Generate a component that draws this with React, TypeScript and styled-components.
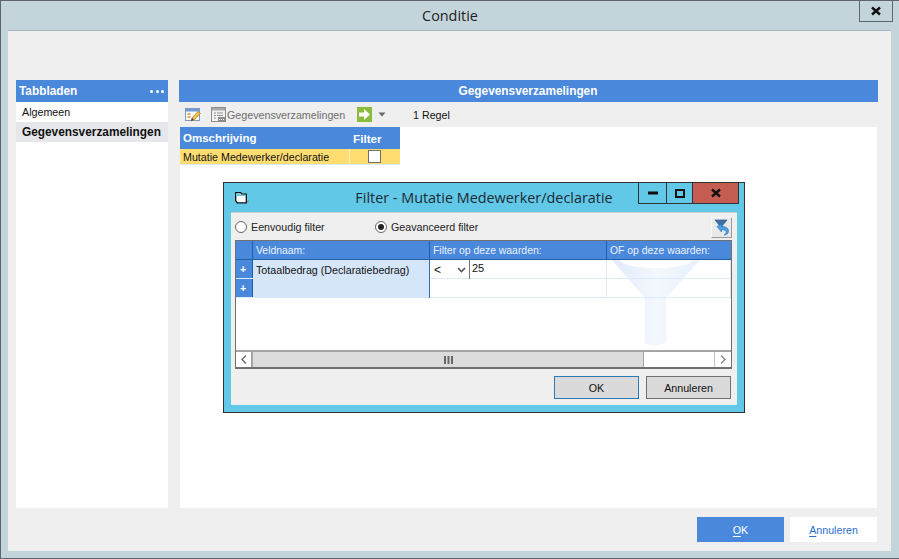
import React from "react";
import styled, { createGlobalStyle } from "styled-components";

const Global = createGlobalStyle`
  html, body { margin: 0; padding: 0; background: #c3d5db; }
  #root { width: 899px; height: 559px; overflow: hidden; }
  * { box-sizing: border-box; }
`;

const Page = styled.div`
  position: relative;
  width: 899px;
  height: 559px;
  display: flex;
  flex-direction: column;
  background: #c3d5db;
  border: solid #5f6570;
  border-width: 1px 0 1px 1px;
  font-family: "Liberation Sans", Tahoma, sans-serif;
  font-size: 10.7px;
  color: #111;
`;
const TitleBar = styled.div`
  height: 29px;
  flex: none;
  display: flex;
  align-items: center;
  justify-content: center;
  font-family: "Open Sans", sans-serif;
  font-size: 14.4px;
  color: #222;
  padding-bottom: 1px;
`;
const CloseBtn = styled.div`
  position: absolute;
  left: 858px;
  top: -1px;
  width: 34px;
  height: 22px;
  border: 1px solid #5f6570;
  display: flex;
  align-items: center;
  justify-content: center;
  svg { display: block; }
`;
const Content = styled.div`
  flex: 1;
  margin: 0 8px 7px 7px;
  background: #efefef;
  border-top: 1px solid #a7b4bb;
  display: flex;
  flex-direction: column;
  padding: 49px 13px 0 8px;
`;
const Columns = styled.div`
  flex: 1;
  display: flex;
  gap: 11px;
  min-height: 0;
`;
const LeftPanel = styled.div`
  width: 152px;
  display: flex;
  flex-direction: column;
  background: #fff;
`;
const RightPanel = styled.div`
  width: 699px;
  display: flex;
  flex-direction: column;
`;
const Header = styled.div<{ $center?: boolean }>`
  height: 22px;
  flex: none;
  background: #4a88dc;
  color: #fff;
  font-weight: 700;
  font-size: 11.85px;
  display: flex;
  align-items: center;
  justify-content: ${(p) => (p.$center ? "center" : "space-between")};
  padding: 0 4px 0 3px;
`;
const Dots = styled.span`
  display: flex;
  gap: 2.5px;
  i { width: 3px; height: 3px; background: #fff; border-radius: 50%; display: block; }
`;
const TabItem = styled.div<{ $active?: boolean }>`
  height: 20px;
  display: flex;
  align-items: center;
  padding-left: 6px;
  background: ${(p) => (p.$active ? "#e6e7eb" : "#fff")};
  font-weight: ${(p) => (p.$active ? 700 : 400)};
  font-size: ${(p) => (p.$active ? "11.85px" : "10.7px")};
  white-space: nowrap;
`;
const Toolbar = styled.div`
  height: 25px;
  flex: none;
  display: flex;
  align-items: center;
  padding-left: 6px;
  color: #111;
  svg { display: block; flex: none; }
`;
const ToolLabel = styled.span<{ $muted?: boolean; $w: number }>`
  width: ${(p) => p.$w}px;
  color: ${(p) => (p.$muted ? "#6d6d6d" : "#111")};
  white-space: nowrap;
`;
const Spacer = styled.span<{ $w: number }>`
  width: ${(p) => p.$w}px;
  flex: none;
`;
const Sheet = styled.div`
  flex: 1;
  margin: 0 1px;
  background: #fff;
`;
const DataTable = styled.div`
  width: 220px;
  display: grid;
  grid-template-columns: 169px 51px;
`;
const TableHead = styled.div<{ $center?: boolean }>`
  height: 22px;
  background: #4a88dc;
  color: #fff;
  font-weight: 700;
  font-size: ${(p) => (p.$center ? "11.7px" : "11.5px")};
  display: flex;
  align-items: center;
  padding-left: ${(p) => (p.$center ? "4px" : "3px")};
`;
const TableCell = styled.div<{ $center?: boolean }>`
  height: 16px;
  background: #ffdd71;
  border-bottom: 1px solid #dbeaf5;
  border-left: ${(p) => (p.$center ? "1px solid #fff3c4" : "0")};
  display: flex;
  align-items: center;
  justify-content: ${(p) => (p.$center ? "center" : "flex-start")};
  padding-left: 3px;
  padding-right: ${(p) => (p.$center ? "5px" : "0")};
  white-space: nowrap;
`;
const CheckBox = styled.span`
  width: 13px;
  height: 13px;
  background: #fff;
  border: 1px solid #707070;
  display: block;
`;
const Footer = styled.div`
  height: 43px;
  flex: none;
  display: flex;
  justify-content: flex-end;
  gap: 6px;
  padding: 9px 1px 0 0;
`;
const MainButton = styled.div<{ $primary?: boolean }>`
  width: 87px;
  height: 25px;
  background: ${(p) => (p.$primary ? "#4a88dc" : "#fff")};
  color: ${(p) => (p.$primary ? "#fff" : "#2d6fd2")};
  font-size: 10.7px;
  display: flex;
  align-items: center;
  justify-content: center;
  u { text-underline-offset: 2px; }
`;

/* dialog: a window lying over the page */
const Dialog = styled.div`
  position: absolute;
  left: 222px;
  top: 181px;
  width: 522px;
  height: 231px;
  background: #62c8e8;
  border: 1px solid #2f3338;
  display: flex;
  flex-direction: column;
  padding: 0 7px 7px;
`;
const DialogBar = styled.div`
  height: 29px;
  flex: none;
  display: flex;
  align-items: center;
  justify-content: center;
  font-family: "Open Sans", sans-serif;
  font-size: 14.4px;
  color: #1d2a33;
  padding-bottom: 1px;
`;
const DialogIcon = styled.svg`
  position: absolute;
  left: 11px;
  top: 9px;
`;
const WinButtons = styled.div`
  position: absolute;
  top: 0;
  right: 5px;
  display: flex;
  height: 21px;
  border: solid #2f3338;
  border-width: 0 1px 1px 1px;
`;
const WinBtn = styled.div<{ $w: number; $close?: boolean }>`
  width: ${(p) => p.$w}px;
  background: ${(p) => (p.$close ? "#c45c52" : "transparent")};
  border-right: ${(p) => (p.$close ? "0" : "1px solid #2f3338")};
  display: flex;
  align-items: center;
  justify-content: center;
  svg { display: block; }
`;
const DialogBody = styled.div`
  flex: 1;
  background: #efefef;
  border-top: 1px solid #c9d0d4;
  display: flex;
  flex-direction: column;
  padding: 0 5px 0 4px;
  min-height: 0;
`;
const RadioRow = styled.div`
  height: 27px;
  flex: none;
  display: flex;
  align-items: center;
  position: relative;
`;
const RadioLabel = styled.label<{ $w: number }>`
  width: ${(p) => p.$w}px;
  display: flex;
  align-items: center;
  gap: 4px;
  white-space: nowrap;
  color: #222;
`;
const RadioDot = styled.span<{ $on?: boolean }>`
  width: 12px;
  height: 12px;
  border-radius: 50%;
  background: #fff;
  border: 1px solid #666;
  flex: none;
  display: flex;
  align-items: center;
  justify-content: center;
  &::after {
    content: "";
    display: ${(p) => (p.$on ? "block" : "none")};
    width: 6px;
    height: 6px;
    border-radius: 50%;
    background: #222;
  }
`;
const UndoBtn = styled.div`
  position: absolute;
  right: 0;
  top: 4px;
  width: 21px;
  height: 21px;
  background: #e9e9e9;
  border: 1px solid;
  border-color: #f8f8f8 #9a9a9a #9a9a9a #f8f8f8;
  display: flex;
  align-items: center;
  justify-content: center;
`;
const Grid = styled.div`
  position: relative;
  height: 129px;
  flex: none;
  background: #fff;
  border: 1px solid #707070;
  border-bottom-width: 2px;
  display: flex;
  flex-direction: column;
`;
const Watermark = styled.svg`
  position: absolute;
  left: 375px;
  top: 19px;
`;
const GridRow = styled.div<{ $head?: boolean }>`
  position: relative;
  display: grid;
  grid-template-columns: 17px 177px 177px 1fr;
  height: 19px;
  background: ${(p) => (p.$head ? "#4a88dc" : "transparent")};
  border-bottom: 1px solid ${(p) => (p.$head ? "#1f5fa8" : "#dcebf7")};
  color: ${(p) => (p.$head ? "#fff" : "#111")};
`;
const PlusCell = styled.div`
  background: #4a88dc;
  color: #fff;
  font-size: 10.5px;
  font-weight: 700;
  display: flex;
  align-items: center;
  justify-content: center;
  padding-right: 2px;
  border-right: 1px solid #1f5fa8;
`;
const HeadCell = styled.div<{ $line?: boolean }>`
  display: flex;
  align-items: center;
  padding-left: 3px;
  border-right: ${(p) => (p.$line ? "1px solid #1f5fa8" : "0")};
  white-space: nowrap;
  color: #eaf3ff;
  font-size: 10.4px;
`;
const NameCell = styled.div`
  background: #d5e6fb;
  display: flex;
  align-items: center;
  padding-left: 3px;
  border-right: 1px solid #2a6fb0;
  white-space: nowrap;
  margin-bottom: -1px;
`;
const ValueCell = styled.div`
  display: flex;
  align-items: center;
  border-right: 1px solid #dcebf7;
  margin-bottom: -1px;
`;
const Combo = styled.div`
  width: 40px;
  height: 100%;
  flex: none;
  border-right: 1px solid #777;
  display: flex;
  align-items: center;
  justify-content: space-between;
  padding: 0 3px 0 4px;
  font-size: 12px;
  svg { display: block; }
`;
const ValueText = styled.span`
  padding: 0 0 3px 2px;
  font-size: 11px;
`;
const GridFill = styled.div`
  flex: 1;
`;
const ScrollBar = styled.div`
  height: 17px;
  flex: none;
  position: relative;
  display: flex;
  background: #fff;
  border-top: 2px solid #a4a4a4;
  svg { display: block; }
`;
const ScrollArrow = styled.div<{ $side: "left" | "right" }>`
  width: 17px;
  flex: none;
  display: flex;
  align-items: center;
  justify-content: center;
  border-${(p) => (p.$side === "left" ? "right: 2px solid #a4a4a4" : "left: 1px solid #c4c4c4")};
`;
const ScrollThumb = styled.div`
  width: 391px;
  flex: none;
  background: #dcdcdc;
  border-right: 1px solid #a4a4a4;
  display: flex;
  align-items: center;
  justify-content: center;
`;
const ScrollRest = styled.div`
  flex: 1;
`;
const DialogFooter = styled.div`
  flex: 1;
  display: flex;
  justify-content: flex-end;
  gap: 7px;
  padding: 7px 1px 0 0;
`;
const DlgButton = styled.div<{ $focus?: boolean }>`
  width: 85px;
  height: 23px;
  background: #dadada;
  border: 1px solid ${(p) => (p.$focus ? "#2a7ab8" : "#707070")};
  color: #111;
  font-size: 10.7px;
  display: flex;
  align-items: center;
  justify-content: center;
`;

export default function App() {
  return (
    <Page>
      <Global />
      <TitleBar>Conditie</TitleBar>
      <CloseBtn>
        <svg width="12" height="10" viewBox="0 0 12 10">
          <path d="M2 1.5 L10 8.5 M10 1.5 L2 8.5" stroke="#111" strokeWidth="2.4" />
        </svg>
      </CloseBtn>
      <Content>
        <Columns>
          <LeftPanel>
            <Header>
              Tabbladen
              <Dots><i /><i /><i /></Dots>
            </Header>
            <TabItem>Algemeen</TabItem>
            <TabItem $active>Gegevensverzamelingen</TabItem>
          </LeftPanel>
          <RightPanel>
            <Header $center>Gegevensverzamelingen</Header>
            <Toolbar>
              <svg width="16" height="16" viewBox="0 0 16 16">
                <rect x="0.5" y="1.5" width="14" height="12" fill="#fdfdfd" stroke="#7d9cc4" />
                <rect x="1" y="2" width="13" height="2.5" fill="#6f9ad6" />
                <path d="M2.5 7h3M2.5 10h3" stroke="#d88a2a" strokeWidth="1.4" />
                <path d="M6 14 L7 11 L13 4.5 L15.5 6.5 L9 13 Z" fill="#f3c04a" stroke="#a87a24" strokeWidth="0.7" />
                <path d="M6 14 L7 11 L9 13 Z" fill="#444" />
              </svg>
              <Spacer $w={10} />
              <svg width="15" height="15" viewBox="0 0 15 15">
                <rect x="0.5" y="0.5" width="14" height="14" fill="#f2f2f2" stroke="#8c8c8c" />
                <rect x="1" y="1" width="13" height="2.5" fill="#a9a9a9" />
                <path d="M3 6h2M6 6h6M3 8.5h2M6 8.5h6M3 11h2" stroke="#8f8f8f" />
                <rect x="7" y="10" width="7" height="4.5" fill="#8a8a8a" />
                <path d="M8 12.5h1M10 12.5h1M12 12.5h1" stroke="#fff" />
              </svg>
              <Spacer $w={1} />
              <ToolLabel $muted $w={130}>Gegevensverzamelingen</ToolLabel>
              <svg width="15" height="15" viewBox="0 0 15 15">
                <rect width="15" height="15" fill="#8bbd3c" />
                <path d="M2 5.5h5V2l6 5.5L7 13V9.5H2z" fill="#fff" />
              </svg>
              <Spacer $w={6} />
              <svg width="8" height="5" viewBox="0 0 8 5">
                <path d="M0.5 0.5h7L4 4.5z" fill="#666" />
              </svg>
              <Spacer $w={27} />
              <ToolLabel $w={40}>1 Regel</ToolLabel>
            </Toolbar>
            <Sheet>
              <DataTable>
                <TableHead>Omschrijving</TableHead>
                <TableHead $center>Filter</TableHead>
                <TableCell>Mutatie Medewerker/declaratie</TableCell>
                <TableCell $center><CheckBox /></TableCell>
              </DataTable>
            </Sheet>
          </RightPanel>
        </Columns>
        <Footer>
          <MainButton $primary><span><u>O</u>K</span></MainButton>
          <MainButton><span><u>A</u>nnuleren</span></MainButton>
        </Footer>
      </Content>

      <Dialog>
        <DialogIcon width="14" height="12" viewBox="0 0 14 12">
          <path d="M0.7 0.7h5l1 1.5h4.6v8.6H2.2L0.7 8.5z" fill="#fff" stroke="#111" strokeWidth="1.3" />
          <path d="M1.4 1.4h4v1.4h5.2v1.2H1.4z" fill="#5fd0e6" />
          <path d="M12 8.5h2v1.5h-2z" fill="#7f9aa6" />
        </DialogIcon>
        <DialogBar>Filter - Mutatie Medewerker/declaratie</DialogBar>
        <WinButtons>
          <WinBtn $w={28}>
            <svg width="10" height="4" viewBox="0 0 10 4"><rect width="10" height="3" y="0.5" fill="#111" /></svg>
          </WinBtn>
          <WinBtn $w={26}>
            <svg width="10" height="9" viewBox="0 0 10 9"><rect x="1" y="1" width="8" height="7" fill="none" stroke="#111" strokeWidth="2" /></svg>
          </WinBtn>
          <WinBtn $w={45} $close>
            <svg width="12" height="10" viewBox="0 0 12 10">
              <path d="M2 1.5 L10 8.5 M10 1.5 L2 8.5" stroke="#111" strokeWidth="2.4" />
            </svg>
          </WinBtn>
        </WinButtons>
        <DialogBody>
          <RadioRow>
            <RadioLabel $w={140}><RadioDot />Eenvoudig filter</RadioLabel>
            <RadioLabel $w={140}><RadioDot $on />Geavanceerd filter</RadioLabel>
            <UndoBtn>
              <svg width="16" height="17" viewBox="0 0 16 17">
                <path d="M1 1h12L8.5 6.5V10L5.5 8V6.5z" fill="#3f6fa8" stroke="#2c4f80" strokeWidth="0.6" />
                <path d="M3 7.5 L7.5 5 V7.5 C11.5 7.3 14.5 8.8 14.5 12 C14.5 14.5 12.5 16 10 16 C11.8 15 12.4 13.8 12 12.5 C11.6 11.2 9.8 10.6 7.5 10.8 V13 Z" fill="#4aa0e6" stroke="#2a6fb8" strokeWidth="0.6" />
              </svg>
            </UndoBtn>
          </RadioRow>
          <Grid>
            <Watermark width="90" height="90" viewBox="0 0 90 90">
              <defs>
                <linearGradient id="fw" x1="0" y1="0" x2="1" y2="0">
                  <stop offset="0" stopColor="#dfeafa" />
                  <stop offset="0.5" stopColor="#f4f8fe" />
                  <stop offset="1" stopColor="#e6f0fb" />
                </linearGradient>
              </defs>
              <path d="M1 0 H89 L55 38 V82 Q44 89 34 83 V38 Z" fill="url(#fw)" />
              <ellipse cx="45" cy="0" rx="36" ry="8" fill="#fff" />
            </Watermark>
            <GridRow $head>
              <PlusCell />
              <HeadCell $line>Veldnaam:</HeadCell>
              <HeadCell $line>Filter op deze waarden:</HeadCell>
              <HeadCell>OF op deze waarden:</HeadCell>
            </GridRow>
            <GridRow>
              <PlusCell>+</PlusCell>
              <NameCell>Totaalbedrag (Declaratiebedrag)</NameCell>
              <ValueCell>
                <Combo>
                  &lt;
                  <svg width="9" height="6" viewBox="0 0 9 6"><path d="M1 1l3.5 3.5L8 1" fill="none" stroke="#555" strokeWidth="1.6" /></svg>
                </Combo>
                <ValueText>25</ValueText>
              </ValueCell>
              <ValueCell />
            </GridRow>
            <GridRow>
              <PlusCell>+</PlusCell>
              <NameCell />
              <ValueCell />
              <ValueCell />
            </GridRow>
            <GridFill />
            <ScrollBar>
              <ScrollArrow $side="left">
                <svg width="6" height="9" viewBox="0 0 6 9"><path d="M5 0.5L1 4.5l4 4" fill="none" stroke="#666" strokeWidth="1.4" /></svg>
              </ScrollArrow>
              <ScrollThumb>
                <svg width="9" height="8" viewBox="0 0 9 8"><path d="M0 0h2v8H0zM3.5 0h2v8h-2zM7 0h2v8H7z" fill="#666" /></svg>
              </ScrollThumb>
              <ScrollRest />
              <ScrollArrow $side="right">
                <svg width="6" height="9" viewBox="0 0 6 9"><path d="M1 0.5l4 4-4 4" fill="none" stroke="#888" strokeWidth="1.4" /></svg>
              </ScrollArrow>
            </ScrollBar>
          </Grid>
          <DialogFooter>
            <DlgButton $focus>OK</DlgButton>
            <DlgButton>Annuleren</DlgButton>
          </DialogFooter>
        </DialogBody>
      </Dialog>
    </Page>
  );
}
